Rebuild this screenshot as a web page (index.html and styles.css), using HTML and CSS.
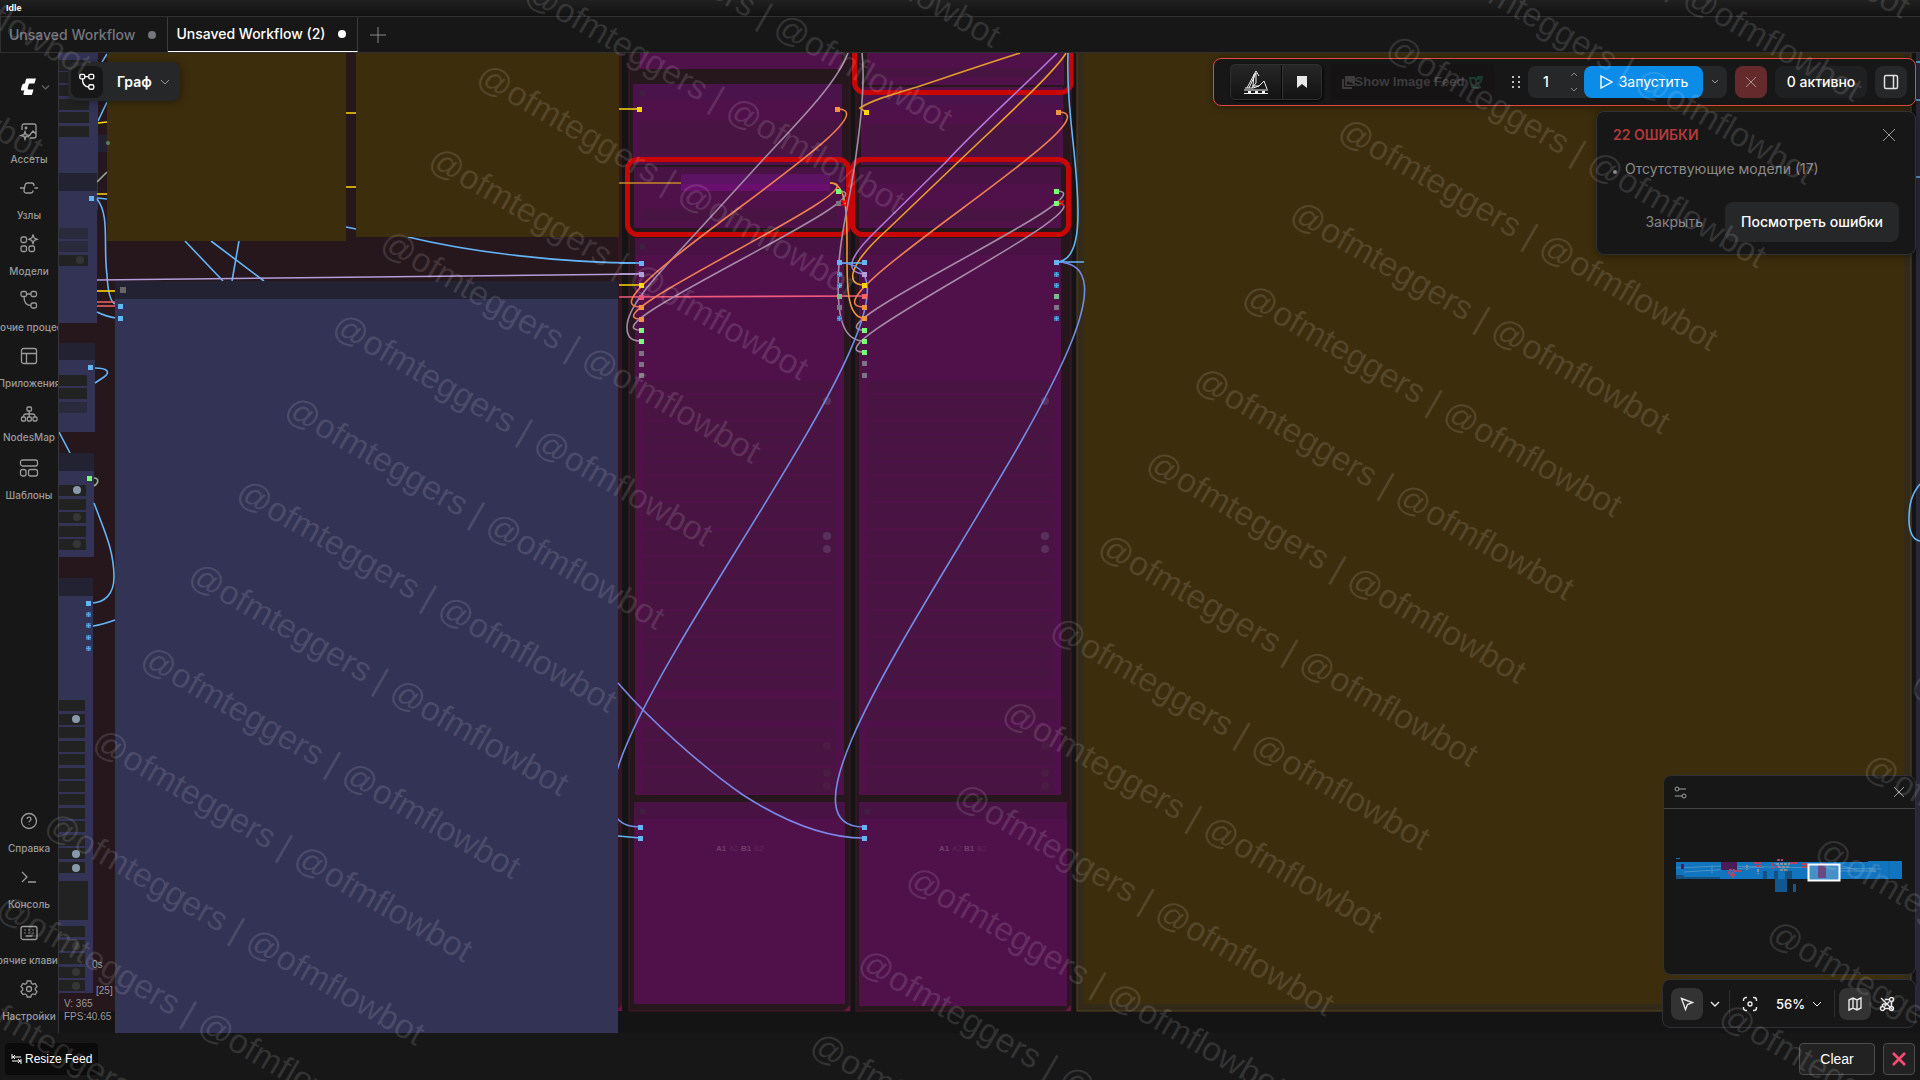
FILE: index.html
```html
<!DOCTYPE html>
<html lang="ru">
<head>
<meta charset="utf-8">
<title>Unsaved Workflow (2)</title>
<link rel="stylesheet" href="styles.css">
</head>
<body>
<div class="status">Idle</div>
<nav class="tabs">
  <button class="tab">Unsaved Workflow<span class="dot"></span></button>
  <button class="tab active">Unsaved Workflow (2)<span class="dot"></span></button>
  <button class="tab-add" aria-label="New"><svg width="16" height="16" viewBox="0 0 16 16"><path d="M8 0v16M0 8h16"/></svg></button>
</nav>

<div class="workspace">
  <aside class="sidebar">
    <button class="logo" aria-label="Menu">
      <svg width="30" height="18" viewBox="0 0 30 18"><path d="M7 0.500h9l-1.600 5H10q-1 0-1.300 1l-1 3.500q-.3 1.500 1 1.500h4.800l-1.600 5.500H4.500q-1.500 0-1-1.500l.8-3H2q-1.500 0-1-1.500l1.200-4q.4-1.500 2-1.500h.8l.6-3q.4-2 1.400-2z" fill="#fff" stroke="none"/><path d="M22 7.500l3.500 3.500 3.500-3.500" fill="none" stroke="#666" stroke-width="1.200"/></svg>
    </button>
    <div class="side-group">
      <button class="side"><svg viewBox="0 0 20 20"><path d="M3 8V4a2 2 0 0 1 2-2h10a2 2 0 0 1 2 2v10a2 2 0 0 1-2 2h-4M17 12l-3-3-5 6"/><circle cx="7" cy="6" r=".8"/><path d="M6 9.500l1 3 3 1-3 1-1 3-1-3-3-1 3-1z"/></svg><span>Ассеты</span></button>
      <button class="side"><svg viewBox="0 0 20 20"><path d="M1 10h4M15.500 10H19M15 8V7.500A2.500 2.500 0 0 0 12.500 5H8.500A2.500 2.500 0 0 0 6 7.500L5 12.500A2.200 2.200 0 0 0 7.500 15h4A2.500 2.500 0 0 0 14 12.500"/></svg><span>Узлы</span></button>
      <button class="side"><svg viewBox="0 0 20 20"><rect x="2" y="3" width="5.500" height="5.500" rx="1.500"/><rect x="2" y="12" width="5.500" height="5.500" rx="1.500"/><rect x="10" y="12" width="5.500" height="5.500" rx="1.500"/><path d="M14 1l1.200 3 3 1.200-3 1.200-1.200 3-1.200-3-3-1.200 3-1.200z"/></svg><span>Модели</span></button>
      <button class="side"><svg viewBox="0 0 20 20"><rect x="2" y="1.500" width="5.500" height="5" rx="1.500"/><rect x="12" y="1.500" width="5.500" height="5" rx="1.500"/><rect x="12" y="13" width="5.500" height="5" rx="1.500"/><path d="M7.500 4H12M5 6.500c0 6 2 9 7 9"/></svg><span>Рабочие процессы</span></button>
      <button class="side"><svg viewBox="0 0 20 20"><rect x="2.500" y="2.500" width="15" height="15" rx="2"/><path d="M2.500 7.500h15M7.500 7.500v10"/></svg><span>Приложения</span></button>
      <button class="side short"><svg viewBox="0 0 20 20"><rect x="8" y="3" width="4.500" height="4" rx="1"/><rect x="2.500" y="13" width="4" height="4" rx="1"/><rect x="8.300" y="13" width="4" height="4" rx="1"/><rect x="14" y="13" width="4" height="4" rx="1"/><path d="M10.200 7v6M4.500 13c0-3 1-3 3-3h5.500c2 0 3 0 3 3"/></svg><span>NodesMap</span></button>
      <button class="side"><svg viewBox="0 0 20 20"><rect x="1.500" y="2" width="17" height="6" rx="2"/><rect x="1.500" y="11.500" width="5.500" height="6.500" rx="2"/><rect x="9.500" y="11.500" width="9" height="6.500" rx="2"/></svg><span>Шаблоны</span></button>
    </div>
    <div class="side-group bottom">
      <button class="side"><svg viewBox="0 0 20 20"><circle cx="10" cy="10" r="7.500"/><path d="M8 8a2 2 0 1 1 2.800 2c-.6.300-.8.600-.8 1.300M10 13.500v.6"/></svg><span>Справка</span></button>
      <button class="side"><svg viewBox="0 0 20 20"><path d="M3 5l5 5-5 5M9 15h8"/></svg><span>Консоль</span></button>
      <button class="side"><svg viewBox="0 0 20 20"><rect x="2" y="3.500" width="16" height="13" rx="2"/><path d="M5.500 7h1M9.500 7h1M13.500 7h1M5.500 10h1M9.500 10h1M13.500 10h1M6.500 13h7"/></svg><span>Горячие клавиши</span></button>
      <button class="side"><svg viewBox="0 0 20 20"><path d="M8.200 2h3.600l.6 2.300 1.500.9 2.300-.7 1.800 3.100-1.700 1.600v1.700l1.700 1.600-1.800 3.100-2.300-.7-1.500.9-.6 2.200H8.200l-.6-2.200-1.500-.9-2.300.7L2 12.500l1.700-1.600V9.200L2 7.600l1.800-3.100 2.300.7 1.500-.9z"/><circle cx="10" cy="10" r="2.500"/></svg><span>Настройки</span></button>
    </div>
  </aside>

  <main class="canvas">
    <svg class="graph" id="graph" xmlns="http://www.w3.org/2000/svg">
      <g id="scene" transform="translate(-59 -53)"></g>
    </svg>

    <div class="canvas-top">
      <button class="mode">
        <span class="mode-icon"><svg width="18" height="18" viewBox="0 0 20 20"><rect x="2" y="1.500" width="5.500" height="5" rx="1.500"/><rect x="12" y="1.500" width="5.500" height="5" rx="1.500"/><rect x="12" y="13" width="5.500" height="5" rx="1.500"/><path d="M7.500 4H12M5 6.500c0 6 2 9 7 9"/></svg></span>
        Граф
        <svg class="chev" width="10" height="6" viewBox="0 0 10 6"><path d="M1 1l4 4 4-4"/></svg>
      </button>

      <div class="right-col">
        <div class="actionbar">
          <div class="crys">
            <button aria-label="Crystools"><svg width="26" height="26" viewBox="0 0 26 26"><path d="M1 21h24M1 24.500h24M4 19L13 2l3 5M6 19L13 4v10l-4 5M11 5l-1 12M9 17h7l5-5 3 8M2 19h8l6-2 4-4"/><path d="M5 23h3M12 23h3M19 23h3" stroke-width="2"/></svg></button>
            <button aria-label="Bookmark"><svg width="12" height="14" viewBox="0 0 12 14"><path d="M1 1h10v12l-5-4-5 4z" fill="#e8e8e8" stroke="none"/></svg></button>
          </div>
          <button class="feed"><svg width="13" height="13" viewBox="0 0 13 13"><path d="M3 0h10v10H3zM0 3h2v8h8v2H0z" fill="#3c3c3d" stroke="none"/><path d="M4 8l2-3 2 2 1-1 3 3z" fill="#151314" stroke="none"/></svg>Show Image Feed <svg class="leaf" width="14" height="14" viewBox="0 0 14 14"><path d="M1 3h5l1 3 2-4h4l-1 4-3 3 2 3-4 1-4-1-1-4zM9 4l2-1" fill="none" stroke="#1c3a31" stroke-width="2"/></svg></button>
          <svg class="grip" width="10" height="14" viewBox="0 0 10 14"><path d="M0 1h2v2H0zM6 1h2v2H6zM0 6h2v2H0zM6 6h2v2H6zM0 11h2v2H0zM6 11h2v2H6z" fill="#bbb"/></svg>
          <div class="run-group">
            <input class="count" aria-label="Count" value="1">
            <span class="steps"><svg width="8" height="20" viewBox="0 0 8 20"><path d="M1 4l3-3 3 3M1 16l3 3 3-3"/></svg></span>
            <button class="run"><svg width="14" height="14" viewBox="0 0 14 14"><path d="M2 1l11 6-11 6z"/></svg>Запустить</button>
            <button class="run-more" aria-label="More"><svg width="8" height="6" viewBox="0 0 8 6"><path d="M1 1l3 3 3-3"/></svg></button>
          </div>
          <button class="stop" aria-label="Stop"><svg width="10" height="10" viewBox="0 0 10 10"><path d="M0 0l10 10M10 0L0 10"/></svg></button>
          <button class="queue">0 активно</button>
          <button class="panel" aria-label="Panel"><svg width="16" height="16" viewBox="0 0 16 16"><rect x="1.500" y="1.500" width="13" height="13" rx="1.500"/><path d="M10.500 1.500v13"/></svg></button>
        </div>
        <section class="errors">
          <header><h2>22 ОШИБКИ</h2><button aria-label="Close"><svg width="12" height="12" viewBox="0 0 12 12"><path d="M0 0l12 12M12 0L0 12"/></svg></button></header>
          <ul><li>Отсутствующие модели (17)</li></ul>
          <footer><button class="ghost">Закрыть</button><button class="solid">Посмотреть ошибки</button></footer>
        </section>
      </div>
    </div>

    <div class="dock">
      <section class="minimap">
        <header>
          <svg width="13" height="13" viewBox="0 0 13 13"><circle cx="3" cy="3" r="2"/><circle cx="10" cy="10" r="2"/><path d="M5 3h7M1 10h7"/></svg>
          <button aria-label="Close"><svg width="10" height="10" viewBox="0 0 10 10"><path d="M0 0l10 10M10 0L0 10"/></svg></button>
        </header>
        <svg class="map" width="252" height="165" viewBox="0 0 252 165">
          <g fill="#1074bf"><path d="M12 53h60v16H12zM12 49h4v1h-4z"/><path d="M20 53h185v17H20zM204 52h34v18h-34z"/><path d="M111 70h12v13h-12zM129 75h3v8h-3z" fill="#10588f"/><path d="M12 66h8v4h-8zM20 68h36v2H20zM99 62h4v8h-4zM110 62h4v8h-4zM121 62h7v8h-7z" fill="#145285"/></g>
          <path d="M225 53v17M189 53v17M213 55v15" stroke="#1467a6"/>
          <path d="M12 59l45-2 100 2 60 1M20 63l80-5M48 56v8M110 54l14 8M162 62h50M178 57l18 5" stroke="#4b93c6" fill="none"/>
          <path d="M57 53h16v8H57zM17 55h3v5h-3z" fill="#4b1c55"/>
          <path d="M65 61h5v3h-5zM70 62h7M66 66h5M69 63v6M90 54h8M92 57h6M113 51h6M108 54v6M111 58h6M126 54h7M138 55h6M138 58h5M143 54v4" stroke="#b04668" fill="none" stroke-width="2" stroke-dasharray="3 1"/>
          <path d="M112 55h14M114 58h12M116 61h8M94 60v5M83 56v5" stroke="#7c93a5" stroke-width="2" stroke-dasharray="3 1"/>
          <path d="M144 55h31v16h-31z" fill="#468fca"/><path d="M154 55h8v14h-8z" fill="#6d4880"/><path d="M157 54h4v2h-4z" fill="#d13d55"/>
          <path d="M144.500 55.500h31v16h-31z" fill="none" stroke="#fff" stroke-width="2"/>
        </svg>
      </section>
      <div class="controls">
        <button class="ctl on" aria-label="Select"><svg width="16" height="16" viewBox="0 0 16 16"><path d="M2.500 2.500l11 4-5 2-2 5z"/></svg></button>
        <button class="ctl slim" aria-label="Modes"><svg width="10" height="6" viewBox="0 0 10 6"><path d="M1 1l4 4 4-4"/></svg></button>
        <span class="sep"></span>
        <button class="ctl" aria-label="Fit"><svg width="16" height="16" viewBox="0 0 16 16"><circle cx="8" cy="8" r="2"/><path d="M1.500 5V4A2.500 2.500 0 0 1 4 1.500h1M11 1.500h1A2.500 2.500 0 0 1 14.500 4v1M14.500 11v1a2.500 2.500 0 0 1-2.500 2.500h-1M5 14.500H4A2.500 2.500 0 0 1 1.500 12v-1"/></svg></button>
        <button class="zoom">56%<svg width="10" height="6" viewBox="0 0 10 6"><path d="M1 1l4 4 4-4"/></svg></button>
        <span class="sep"></span>
        <button class="ctl on" aria-label="Map"><svg width="16" height="16" viewBox="0 0 16 16"><path d="M2 4l4-2 4 2 4-2v10l-4 2-4-2-4 2zM6 2v10M10 4v10"/></svg></button>
        <button class="ctl" aria-label="Links"><svg width="16" height="16" viewBox="0 0 16 16"><circle cx="3.500" cy="12.500" r="2"/><circle cx="12.500" cy="3.500" r="2"/><circle cx="12.500" cy="12.500" r="2"/><path d="M2 2l12 12M10.500 3.500H6M3.500 10.500V8M5.500 12.500h5M12.500 5.500v5M4 8h4M5.500 10.500l5-5"/></svg></button>
      </div>
    </div>
  </main>
</div>

<footer class="feedbar">
  <button class="resize"><svg width="11" height="10" viewBox="0 0 11 10"><path d="M1 0v5M10 5v5M1 3h9M4 1L2 3l2 2M1 7h9M7 5l2 2-2 2" fill="none" stroke="#fff"/></svg>Resize Feed</button>
  <span class="grow"></span>
  <button class="clear">Clear</button>
  <button class="close" aria-label="Close"><svg width="14" height="14" viewBox="0 0 14 14"><path d="M1 1l12 12M13 1L1 13"/></svg></button>
</footer>

<div class="watermark" aria-hidden="true"><div class="marks" id="marks"></div></div>
<script src="app.js"></script>
</body>
</html>
```
FILE: styles.css
```css
* { box-sizing: border-box; }
body {
  margin: 0;
  height: 100vh;
  display: flex;
  flex-direction: column;
  background: #171718;
  color: #fff;
  font: 14px/20px Inter, "Liberation Sans", sans-serif;
  overflow: hidden;
  position: relative;
}
button, input { font: inherit; color: inherit; border: 0; padding: 0; background: none; }
button { display: flex; align-items: center; justify-content: center; white-space: nowrap; }
svg { flex: none; display: block; fill: none; stroke: currentColor; }

.status {
  height: 16px;
  padding-left: 6px;
  font: bold 9px/17px "Liberation Sans", sans-serif;
  background: linear-gradient(#202020, #121212);
}
.tabs { display: flex; height: 37px; flex: none; border: 1px solid #303032; border-right: 0; }
.tab { gap: 13px; padding: 0 11px 0 8px; color: #75757c; border-right: 1px solid #3c3c3f; font-size: 14px; font-weight: 500; }
.tab.active { color: #fff; border-bottom: 1px solid #fff; }
.dot { width: 8px; height: 8px; border-radius: 50%; background: currentColor; }
.tab-add { width: 39px; color: #8a8a8a; }

.workspace { flex: 1; display: flex; min-height: 0; }
.sidebar { width: 59px; flex: none; display: flex; flex-direction: column; border-right: 1px solid #36363a; background: #171718; padding: 16px 0 4px; }
.logo { height: 36px; width: 100%; padding-left: 12px; }
.side-group { display: flex; flex-direction: column; padding-top: 11px; }
.side-group.bottom { margin-top: auto; padding: 0; }
.side { height: 56px; flex-direction: column; gap: 9px; width: 58px; overflow: hidden; color: #9a9a9a; font-size: 10px; line-height: 16px; font-weight: 500; }
.side.short { gap: 5px; }
.side svg { width: 20px; height: 20px; stroke-width: 1.3; }

.canvas { flex: 1; min-width: 0; position: relative; display: flex; flex-direction: column; justify-content: space-between; padding: 5px 4px; background: #141414; overflow: hidden; }
.graph { position: absolute; inset: 0; width: 100%; height: 100%; stroke: none; }
.graph path { fill: none; stroke-width: 1.6; }
.graph text { font: 10px "Liberation Sans", sans-serif; fill: #9a9a9a; }
.graph .tag { font-size: 8px; fill: #704069; font-weight: bold; }
.graph .tag.dim { fill: #5f2558; font-weight: normal; }

.canvas-top { position: relative; display: flex; justify-content: space-between; align-items: flex-start; }
.mode { margin: 4px 0 0 5px; height: 39px; padding: 3px 10px 3px 3px; gap: 8px; border-radius: 8px; background: #262729; font-weight: 600; box-shadow: 1px 1px 8px #0006; }
.mode-icon { width: 32px; height: 32px; margin-right: 6px; display: grid; place-items: center; border-radius: 8px; background: #171718; stroke-width: 1.5; }
.chev { color: #9a9a9a; }

.right-col { display: flex; flex-direction: column; align-items: flex-end; gap: 5px; }
.actionbar { display: flex; align-items: center; height: 48px; padding: 0 8px 0 16px; border: 1px solid #e04a42; border-radius: 8px; background: #171718; box-shadow: 1px 1px 8px #0006; }
.crys { display: flex; height: 36px; border: 1px solid #303030; border-radius: 5px; background: linear-gradient(#262626, #131313); box-shadow: 1px 1px 3px #000; overflow: hidden; }
.crys button { width: 51px; color: #f0f0f0; border-right: 1px solid #050505; }
.crys button + button { width: 39px; border-right: 0; border-left: 1px solid #353535; }
.feed { width: 163px; height: 36px; margin: 0 18px 0 9px; background: #151314; border-radius: 4px; color: #3c3c3d; font: bold 13px/20px "Liberation Sans", sans-serif; }
.leaf { margin-left: 5px; }
.grip { stroke: none; margin-right: 6px; }
.run-group { display: flex; height: 32px; margin-right: 8px; border-radius: 8px; background: #262729; overflow: hidden; }
.count { width: 36px; text-align: center; font-weight: 500; min-width: 0; }
.steps { width: 20px; display: grid; place-items: center; color: #85858a; }
.run { width: 119px; gap: 6px; border-radius: 8px; background: #0b8ce9; }
.run svg { stroke-width: 1.4; }
.run-more { width: 24px; color: #9a9a9a; }
.stop, .panel { width: 32px; height: 32px; border-radius: 8px; background: #262729; }
.stop { background: #652a2c; color: #a89090; margin-right: 8px; }
.queue { width: 92px; height: 32px; border-radius: 8px; background: #1f2022; margin-right: 8px; font-weight: 500; }
.panel { color: #e0e0e0; stroke-width: 1.5; }

.errors { width: 320px; height: 144px; padding: 7px 16px 12px; border: 1px solid #303135; border-radius: 8px; background: #171718; display: flex; flex-direction: column; box-shadow: 1px 1px 8px #0006; }
.errors header { display: flex; justify-content: space-between; align-items: center; height: 32px; padding-right: 4px; }
.errors header button { color: #9a9a9a; }
.errors h2 { margin: 0; font-size: 14px; line-height: 20px; font-weight: 600; color: #b33a3a; }
.errors ul { margin: 8px 0 0; padding: 0 0 0 12px; color: #8a8a8a; list-style: none; }
.errors li::before { content: ""; float: left; width: 4px; height: 4px; border-radius: 50%; margin: 11px 0 0 -12px; background: #8a8a8a; }
.errors footer { display: flex; justify-content: flex-end; margin-top: auto; }
.errors footer button { height: 40px; border-radius: 8px; }
.ghost { color: #85858a; padding: 0 22px; font-weight: 400; }
.solid { width: 174px; background: #262729; font-weight: 500; }

.dock { position: relative; align-self: flex-end; display: flex; flex-direction: column; align-items: flex-end; gap: 4px; }
.minimap { width: 253px; height: 200px; border: 1px solid #303135; border-radius: 8px; background: #171718; }
.minimap header { display: flex; align-items: center; justify-content: space-between; height: 33px; padding: 0 11px 0 10px; border-bottom: 1px solid #454548; color: #a0a0a0; }
.map { stroke: none; }
.controls { display: flex; align-items: center; width: 254px; height: 49px; padding: 0 8px; border: 1px solid #303135; border-radius: 8px; background: #171718; }
.ctl { width: 32px; height: 32px; border-radius: 8px; color: #e8e8e8; stroke-width: 1.4; }
.ctl.on { background: #333333; }
.slim { width: 24px; }
.sep { width: 1px; height: 27px; margin: 0 4px 0 2px; background: #2e2e31; }
.zoom { width: 66px; gap: 7px; font-size: 13px; font-weight: 500; }

.feedbar { display: flex; align-items: center; flex: none; height: 47px; gap: 8px; padding: 5px 5px 0 5px; }
.grow { flex: 1; }
.resize { height: 32px; padding: 0 6px; gap: 3px; border-radius: 4px; background: #0b0b0b; font: 12px/16px "Liberation Sans", sans-serif; }
.clear, .close { height: 32px; border: 1px solid #4c4c4c; border-radius: 4px; background: #222; }
.clear { width: 76px; font: 14px/20px "Liberation Sans", sans-serif; }
.close { width: 32px; color: #ff4a72; stroke-width: 2.5; }

.watermark { position: absolute; inset: 0; overflow: hidden; pointer-events: none; }
.marks {
  position: absolute;
  left: -321px;
  top: -1090px;
  transform: rotate(30deg);
  transform-origin: 321px 1090px;
  display: grid;
  grid-template-columns: repeat(4, 773px);
  font: 34px/96px "Liberation Sans", sans-serif;
  color: rgb(255 255 255 / 12%);
  white-space: nowrap;
}
```
FILE: app.js
```js
const out = [];
const rect = (x1, y1, x2, y2, fill, extra = '') =>
  out.push(`<rect x="${x1}" y="${y1}" width="${x2 - x1}" height="${y2 - y1}" fill="${fill}" ${extra}/>`);
const port = (x, y, fill) => rect(x - 2, y - 2, x + 3, y + 3, fill);
const gridPort = (x, y) => {
  rect(x - 2, y - 2, x + 3, y + 3, '#3d72a8');
  rect(x, y - 2, x + 1, y + 3, '#5aa5e8'); rect(x - 2, y, x + 3, y + 1, '#5aa5e8');
};
const disc = (x, y, fill, r = 4) => out.push(`<circle cx="${x}" cy="${y}" r="${r}" fill="${fill}"/>`);
const link = (d, stroke) => out.push(`<path d="${d}" stroke="${stroke}"/>`);
const wire = (x1, y1, x2, y2, stroke) => {
  const d = Math.hypot(x2 - x1, y2 - y1) / 4;
  link(`M${x1} ${y1}C${x1 + d} ${y1} ${x2 - d} ${y2} ${x2} ${y2}`, stroke);
};
const label = (x, y, s, cls = '') => out.push(`<text x="${x}" y="${y}" class="${cls}">${s}</text>`);

const BLUE = '#64b5f6', BODY = '#333355', TITLE = '#222233', W = '#222222';
const P = '#50114a', PT = '#481344', PW = '#481441', GROUP = '#26171d';
const GREEN = '#7bff78', GRAY = '#a58aa8', SAGE = '#9aaa98', ORANGE = '#f0953f', CORAL = '#ee7d55';
const YELLOW = '#ffd500', LILAC = '#b39ddb', MUTE = '#7a7484', OLIVE = '#3c2d0c';

/* groups */
rect(59, 53, 622, 1011, GROUP);
rect(618, 53, 622, 1011, '#331622');
rect(629, 40, 850, 1011, GROUP, 'stroke="#43172c"');
rect(856, 40, 1071, 1011, GROUP, 'stroke="#43172c"');
[622, 850, 1071].forEach(x => out.push(`<polygon points="${x},1005 ${x},1011 ${x - 6},1011" fill="#6b1640"/>`));
rect(1077, 40, 1911, 1011, '#332a19', 'stroke="#57431c"');
rect(1084, 53, 1904, 1004, OLIVE);
rect(1916, 53, 2600, 1011, '#2a2838');

/* narrow nodes at the left edge */
link('M107 54l-5 8M107 102l-9 19M76 160l-8 13M59 432l11 21', BLUE);
rect(59, 53, 98, 210, BODY);
[60, 72, 85, 99, 112, 126].forEach(y => rect(59, y, 89, y + 11, W));
rect(98, 135, 108, 152, TITLE);
link('M98 123l9-1M97 194h10M346 113h10M346 187h10', YELLOW);
link('M97 182l10-10', SAGE);
rect(59, 173, 97, 191, TITLE); rect(59, 191, 97, 323, BODY);
rect(59, 228, 88, 239, '#2a2a3c'); rect(59, 241, 88, 252, '#2a2a3c'); rect(59, 255, 88, 266, W); disc(80, 260, '#333');
rect(59, 343, 95, 360, TITLE); rect(59, 360, 95, 432, BODY);
rect(59, 375, 87, 386, W); rect(59, 388, 87, 399, W); rect(59, 402, 87, 413, '#2a2a3c');
rect(59, 453, 94, 471, TITLE); rect(59, 471, 94, 557, BODY);
[485, 499, 512, 526, 539].forEach(y => rect(59, y, 86, y + 11, W));
disc(77, 490, '#8899aa'); disc(77, 517, '#363636'); disc(77, 544, '#363636');
rect(59, 578, 93, 596, TITLE); rect(59, 596, 93, 993, BODY);
[700, 714, 727, 741, 754, 768, 781, 794, 808, 821, 835, 848, 862, 926, 940, 953, 967, 980].forEach(y => rect(59, y, 85, y + 11, W));
rect(59, 881, 88, 920, W);
[719, 854, 868].forEach(y => disc(76, y, '#8899aa'));
[946, 972, 986].forEach(y => disc(76, y, '#363636'));
label(92, 968, '0s'); label(96, 994, '[25]'); label(64, 1007, 'V: 365'); label(64, 1020, 'FPS:40.65');
port(91, 198, BLUE); port(90, 367, BLUE); port(89, 478, GREEN); port(88, 603, BLUE);
[614, 625, 637, 648].forEach(y => gridPort(88, y));

link('M97 198l10 1M97 199C110 215 103 245 107 275C108 295 111 302 115 304M97 312C103 315 108 317 116 318', BLUE);
link('M95 368C107 368 111 372 104 377L95 383M94 503C104 530 114 550 114 577C114 595 104 602 93 603M93 626C100 625 107 623 115 620', BLUE);
link('M94 478C99 478 99 483 94 486', SAGE);
link('M97 291h18', YELLOW);
link('M97 302h18M97 306h18', '#ee6666');
link('M185 241L223 281M211 241L264 281M239 241L232 281M346 227L356 229M408 237C470 252 560 263 641 263', BLUE);
link('M97 280L641 274', LILAC);

/* large nodes */
rect(107, 53, 346, 241, OLIVE); rect(356, 53, 619, 237, OLIVE);
disc(108, 143, '#5c8059', 2);
rect(115, 281, 618, 299, TITLE); rect(115, 299, 618, 1033, BODY);
rect(120, 287, 126, 293, '#666'); port(120, 306, BLUE); port(120, 318, BLUE);

/* purple columns */
rect(640, 53, 842, 69, P);
rect(633, 84, 842, 165, P); rect(633, 84, 842, 101, '#4b134b'); rect(639, 121, 839, 155, PW);
rect(634, 167, 845, 228, P); rect(634, 167, 845, 184, PT); rect(642, 209, 835, 222, PW);
rect(681, 174, 830, 191, '#6b0f6e'); rect(681, 174, 830, 184, '#5c1364');
rect(867, 53, 1064, 85, P); rect(867, 68, 1056, 78, PW);
rect(861, 87, 1063, 165, P); rect(861, 95, 1063, 105, '#4b134b'); rect(866, 124, 1058, 155, PW);
rect(859, 167, 1061, 228, P); rect(859, 167, 1061, 184, PT); rect(867, 209, 1058, 222, PW);
[[635, 844, 643, 836], [859, 1061, 867, 1054]].forEach(([a, b, c, d]) => {
  rect(a, 238, b, 795, P); rect(a, 238, b, 255, PT);
  for (let i = 0; i < 23; i++) { const y = Math.round(381 + i * 13.5); rect(c, y, d, y + 12, PW); }
  rect(c - 2, 698, d + 3, 721, PW);
  for (let i = 0; i < 5; i++) { const y = Math.round(727 + i * 13.5); rect(c, y, d, y + 12, PW); }
  [401, 536, 549].forEach(y => disc(d - 9, y, '#59305c'));
  [746, 773, 786].forEach(y => disc(d - 9, y, '#4b1c43'));
});
rect(634, 802, 845, 1004, P); rect(634, 802, 845, 819, PT);
rect(859, 802, 1067, 1006, P); rect(859, 802, 1067, 819, PT);
[[642, 93], [642, 246], [642, 811], [867, 811]].forEach(([x, y]) => rect(x - 2, y - 2, x + 3, y + 3, '#402040'));
[716, 939].forEach(x => {
  label(x, 851, 'A1', 'tag'); label(x + 13, 851, 'A2', 'tag dim'); label(x + 25, 851, 'B1', 'tag'); label(x + 38, 851, 'B2', 'tag dim');
});

/* error frames */
const frame = 'rx="10" stroke="#c90606" stroke-width="5"';
rect(627.5, 159.5, 848.5, 234.5, 'none', frame);
rect(852.5, 159.5, 1068.5, 234.5, 'none', frame);
rect(854.5, 20, 1071, 92.5, 'none', frame);

/* links */
link('M619 109h21M619 285h22', YELLOW);
link('M619 183h62', '#c98a25');
link('M619 263L641 263', BLUE); link('M619 274h22', LILAC);
link('M619 297L864 296', '#f2587c');
link('M848 53C836 85 795 125 760 163L697 232C660 272 627 305 627 327C627 338 632 341 641 341', GRAY);
wire(837, 109, 641, 307, CORAL);
wire(830, 183, 641, 319, CORAL);
wire(838, 191, 641, 330, GRAY);
wire(830, 183, 864, 318, ORANGE);
link('M862 53C866 90 858 140 855 163C850 200 841 230 839 263C836 310 840 341 864 341', GRAY);
link('M1020 53C985 64 950 76 917 87C890 95 870 101 860 108L866 112', '#e09a30');
link('M1057 53C1020 90 980 125 945 163L877 230C850 256 843 272 864 274', '#b078d8');
link('M1066 53C1055 72 1000 122 955 165L887 230C848 265 845 285 864 285', '#eda02a');
wire(1058, 112, 864, 307, CORAL);
wire(1056, 191, 864, 330, GRAY);
wire(1056, 203, 864, 352, GRAY);
link('M1068 53C1066 110 1078 160 1078 213C1078 250 1068 262 1056 262H1084M839 263H864', BLUE);
wire(1056, 262, 864, 827, '#738ce6');
wire(839, 263, 640, 827, '#738ce6');
rect(606, 700, 618, 1000, BODY);
link('M618 683C650 720 700 765 743 795C785 822 825 838 864 838', '#7c86e4');
link('M618 836L640 838', BLUE);
link('M1920 484C1911 495 1909 505 1909 520C1909 532 1913 540 1920 541M1916 62h4M1916 100h4M1916 177h4', BLUE);

[[263, BLUE], [274, LILAC], [285, YELLOW], [297, '#ee5577'], [307, ORANGE], [319, ORANGE], [330, GREEN], [341, GREEN], [353, MUTE], [364, MUTE], [375, MUTE]].forEach(([y, c]) => port(641, y, c));
[[262, BLUE], [274, LILAC], [285, YELLOW], [296, '#ff6666'], [307, ORANGE], [318, ORANGE], [330, GREEN], [341, GREEN], [352, GREEN], [363, MUTE], [375, MUTE]].forEach(([y, c]) => port(864, y, c));
[839, 1056].forEach(x => { port(x, 262, BLUE); gridPort(x, 274); gridPort(x, 285); port(x, 296, '#7dbb86'); port(x, 307, MUTE); gridPort(x, 318); });
port(639, 109, YELLOW); port(837, 109, ORANGE); port(866, 112, YELLOW); port(1058, 112, ORANGE);
port(838, 191, GREEN); port(838, 203, MUTE); port(1056, 191, GREEN); port(1056, 203, GREEN);
link('M841 200l5 6M846 200l-5 6M1059 200l5 6M1064 200l-5 6', '#ff0000');
port(640, 827, BLUE); port(640, 838, BLUE); port(864, 827, BLUE); port(864, 838, BLUE);

document.getElementById('scene').innerHTML = out.join('');

const marks = document.getElementById('marks');
for (let i = 0; i < 88; i++) {
  const s = document.createElement('span');
  s.textContent = '@ofmteggers | @ofmflowbot';
  marks.append(s);
}
```
